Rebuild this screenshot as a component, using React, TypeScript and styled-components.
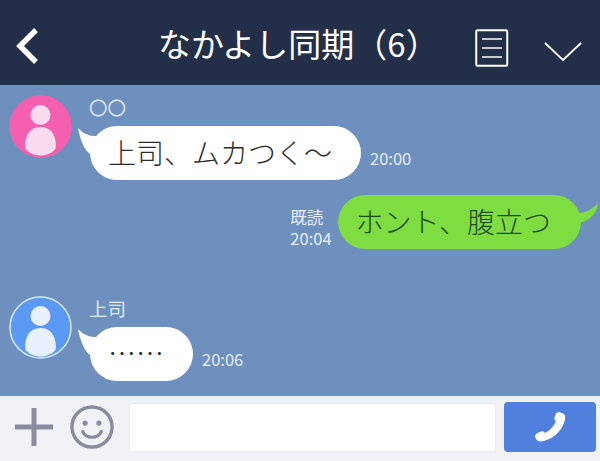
import React from "react";
import styled, { createGlobalStyle } from "styled-components";

const GlobalStyle = createGlobalStyle`
  html, body {
    margin: 0;
    padding: 0;
    background: #f1f2f6;
  }
  body {
    font-family: "Noto Sans CJK JP", "Noto Sans", sans-serif;
  }
`;

const Screen = styled.div`
  width: 600px;
  height: 461px;
  display: flex;
  flex-direction: column;
  overflow: hidden;
`;

const Header = styled.header`
  height: 85px;
  flex: none;
  display: flex;
  align-items: center;
  padding: 0 18px 0 15px;
  box-sizing: border-box;
  background: #232f48;
  color: #fff;
`;

const Title = styled.h1`
  margin: 1px 0 0 119px;
  font-size: 33px;
  line-height: 40px;
  font-weight: 400;
  white-space: nowrap;
  width: 317px;
`;

const Chat = styled.main`
  flex: 1;
  background: #6e90bf;
  padding-top: 10px;
  box-sizing: border-box;
  display: flex;
  flex-direction: column;
`;

const Row = styled.div<{ $top?: number; $right?: boolean }>`
  display: flex;
  margin-top: ${(p) => p.$top ?? 0}px;
  padding: ${(p) => (p.$right ? "0 19px 0 0" : "0 0 0 9px")};
  justify-content: ${(p) => (p.$right ? "flex-end" : "flex-start")};
`;

const Body = styled.div`
  margin-left: 18px;
  display: flex;
  flex-direction: column;
`;

const Name = styled.div`
  height: 31px;
  font-size: 18.5px;
  line-height: 24px;
  color: #e4ebf6;
  margin-left: -1px;
`;

const Line = styled.div`
  display: flex;
  align-items: flex-end;
`;

const Bubble = styled.div<{ $own?: boolean }>`
  position: relative;
  height: 54px;
  padding: ${(p) => (p.$own ? "0 30px 0 18px" : "0 29px 0 18px")};
  border-radius: 27px;
  font-size: 28px;
  font-weight: 300;
  line-height: 52px;
  white-space: nowrap;
  color: ${(p) => (p.$own ? "#1c4a18" : "#2c2c2c")};
  background: ${(p) => (p.$own ? "#7fdc41" : "#fff")};
`;

const Tail = styled.svg<{ $own?: boolean }>`
  position: absolute;
  top: ${(p) => (p.$own ? "6px" : "1px")};
  ${(p) => (p.$own ? "right: -18px;" : "left: -13px;")}
  width: 26px;
  height: 30px;
`;

const Meta = styled.div<{ $own?: boolean }>`
  font-size: 16.5px;
  line-height: 21px;
  color: #e6edf7;
  text-align: left;
  margin: ${(p) => (p.$own ? "0 6px 0 0" : "0 0 11px 9px")};
`;

const AvatarBox = styled.svg`
  width: 63px;
  height: 63px;
  flex: none;
  display: block;
`;

const Footer = styled.footer`
  height: 65px;
  flex: none;
  display: flex;
  align-items: center;
  padding: 0 4px 3px 15px;
  box-sizing: border-box;
  background: #f1f2f6;
`;

const FooterIcon = styled.svg<{ $gap: number }>`
  flex: none;
  display: block;
  margin-right: ${(p) => p.$gap}px;
`;

const InputBox = styled.div`
  width: 367px;
  height: 49px;
  margin-right: 8px;
  background: #fff;
  border-radius: 3px;
  border: 1px solid #e9eaee;
  box-sizing: border-box;
`;

const SendButton = styled.button`
  width: 92px;
  height: 50px;
  padding: 0;
  border: 0;
  border-radius: 4px;
  background: #4f80dd;
  display: flex;
  align-items: center;
  justify-content: center;
`;

const HeaderIcon = styled.svg<{ $left?: number; $top?: number }>`
  flex: none;
  display: block;
  margin-left: ${(p) => p.$left ?? 0}px;
  margin-top: ${(p) => p.$top ?? 0}px;
`;

const Avatar = ({ bg, body, ring }: { bg: string; body: string; ring?: string }) => (
  <AvatarBox viewBox="0 0 63 63">
    <circle cx="31.5" cy="31.5" r="30.5" fill={bg} stroke={ring ?? bg} strokeWidth="1.5" />
    <circle cx="31.5" cy="20" r="10" fill={body} />
    <path
      d="M16.5 54 C15 44 19 32 31.5 32 C44 32 48 44 46.5 54 C42 59 36 60.5 31.5 60.5 C27 60.5 21 59 16.5 54Z"
      fill={body}
    />
  </AvatarBox>
);

const BubbleTail = ({ own }: { own?: boolean }) =>
  own ? (
    <Tail $own viewBox="0 0 26 30">
      <path d="M0 12 C8 13 17 11 25 2 C24 12 17 20 6 22 L0 26Z" fill="#7fdc41" />
    </Tail>
  ) : (
    <Tail viewBox="0 0 26 30">
      <path d="M1 1 C6 7 14 10 24 9 L24 28 L14 28 C7 23 3 12 1 1Z" fill="#fff" />
    </Tail>
  );

const App = () => (
  <Screen>
    <GlobalStyle />
    <Header>
      <HeaderIcon $top={6} width="24" height="38" viewBox="0 0 24 38">
        <path d="M21 3 L5 19 L21 35" fill="none" stroke="#fff" strokeWidth="5.5" />
      </HeaderIcon>
      <Title>なかよし同期（6）</Title>
      <HeaderIcon $top={11} width="34" height="38" viewBox="0 0 34 38">
        <rect x="1.25" y="1.25" width="31" height="35.5" rx="1.5" fill="none" stroke="#fff" strokeWidth="2" />
        <path d="M7 10 H27 M7 19 H27 M7 28 H27" stroke="#fff" strokeWidth="1.6" />
      </HeaderIcon>
      <HeaderIcon $left={35} $top={18} width="38" height="20" viewBox="0 0 38 20">
        <path d="M1 1 L19 18 L37 1" fill="none" stroke="#fff" strokeWidth="1.8" />
      </HeaderIcon>
    </Header>
    <Chat>
      <Row>
        <Avatar bg="#f55fb0" body="#fbdcee" />
        <Body>
          <Name>〇〇</Name>
          <Line>
            <Bubble>
              <BubbleTail />
              上司、ムカつく〜
            </Bubble>
            <Meta>20:00</Meta>
          </Line>
        </Body>
      </Row>
      <Row $top={15} $right>
        <Line>
          <Meta $own>
            既読
            <br />
            20:04
          </Meta>
          <Bubble $own>
            <BubbleTail own />
            ホント、腹立つ
          </Bubble>
        </Line>
      </Row>
      <Row $top={47}>
        <Avatar bg="#5a9af5" body="#e8f0fb" ring="#dce8f8" />
        <Body>
          <Name>上司</Name>
          <Line>
            <Bubble>
              <BubbleTail />
              ……
            </Bubble>
            <Meta>20:06</Meta>
          </Line>
        </Body>
      </Row>
    </Chat>
    <Footer>
      <FooterIcon $gap={17} width="38" height="38" viewBox="0 0 38 38">
        <path d="M0 19 H38 M19 0 V38" stroke="#878c9f" strokeWidth="5" />
      </FooterIcon>
      <FooterIcon $gap={15} width="44" height="44" viewBox="0 0 45 45">
        <circle cx="22.5" cy="22.5" r="20.5" fill="none" stroke="#878c9f" strokeWidth="3.5" />
        <circle cx="15.5" cy="18.5" r="2.6" fill="#878c9f" />
        <circle cx="29.5" cy="18.5" r="2.6" fill="#878c9f" />
        <path d="M13 27 C16 35 29 35 32 27" fill="none" stroke="#878c9f" strokeWidth="3.2" strokeLinecap="round" />
      </FooterIcon>
      <InputBox />
      <SendButton aria-label="call">
        <svg width="34" height="34" viewBox="0 0 34 34">
          <path
            d="M26 2 L30 3.5 C32 4.5 32.5 6.5 32 9.5 C30 19 22 28 11 31 C7 32 4.5 31.5 3 29 L2 26.5 C2 25 3 24 4.5 23 L8 21.5 C9.5 21 11 21.5 12 23 C17 20.5 21 16 23 11 C21.5 10 21 9 21.5 7.5 L23 3.5 C24 2.5 25 1.8 26 2Z"
            fill="#fff"
          />
        </svg>
      </SendButton>
    </Footer>
  </Screen>
);

export default App;
